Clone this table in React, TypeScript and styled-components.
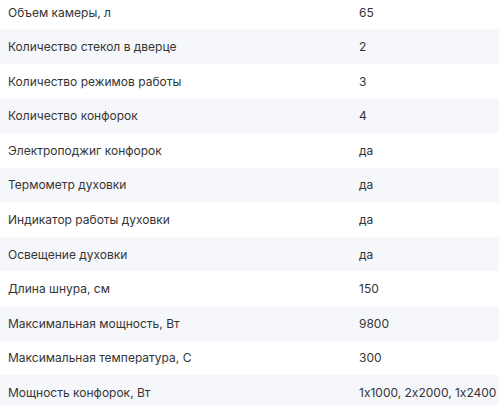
import styled, { createGlobalStyle } from "styled-components";

const Global = createGlobalStyle`
  html, body {
    margin: 0;
    padding: 0;
    background: #ffffff;
    overflow: hidden;
  }
`;

const specs: [string, string][] = [
  ["Объем камеры, л", "65"],
  ["Количество стекол в дверце", "2"],
  ["Количество режимов работы", "3"],
  ["Количество конфорок", "4"],
  ["Электроподжиг конфорок", "да"],
  ["Термометр духовки", "да"],
  ["Индикатор работы духовки", "да"],
  ["Освещение духовки", "да"],
  ["Длина шнура, см", "150"],
  ["Максимальная мощность, Вт", "9800"],
  ["Максимальная температура, С", "300"],
  ["Мощность конфорок, Вт", "1x1000, 2x2000, 1x2400"],
];

const Table = styled.div`
  display: flex;
  flex-direction: column;
  margin-top: -5.3px;
  width: 499px;
  font-family: Inter, "Noto Sans", sans-serif;
  font-size: 12px;
  font-feature-settings: "calt" 0;
  color: #353535;
`;

const Row = styled.div<{ $shaded: boolean }>`
  display: grid;
  grid-template-columns: 351px 1fr;
  align-items: center;
  height: 34.6px;
  padding-left: 8px;
  background: ${(p) => (p.$shaded ? "#f6f7fb" : "#ffffff")};
`;

const Cell = styled.div`
  white-space: nowrap;
`;

export default function App() {
  return (
    <>
      <Global />
      <Table>
        {specs.map(([name, value], i) => (
          <Row key={name} $shaded={i % 2 === 1}>
            <Cell>{name}</Cell>
            <Cell>{value}</Cell>
          </Row>
        ))}
      </Table>
    </>
  );
}
